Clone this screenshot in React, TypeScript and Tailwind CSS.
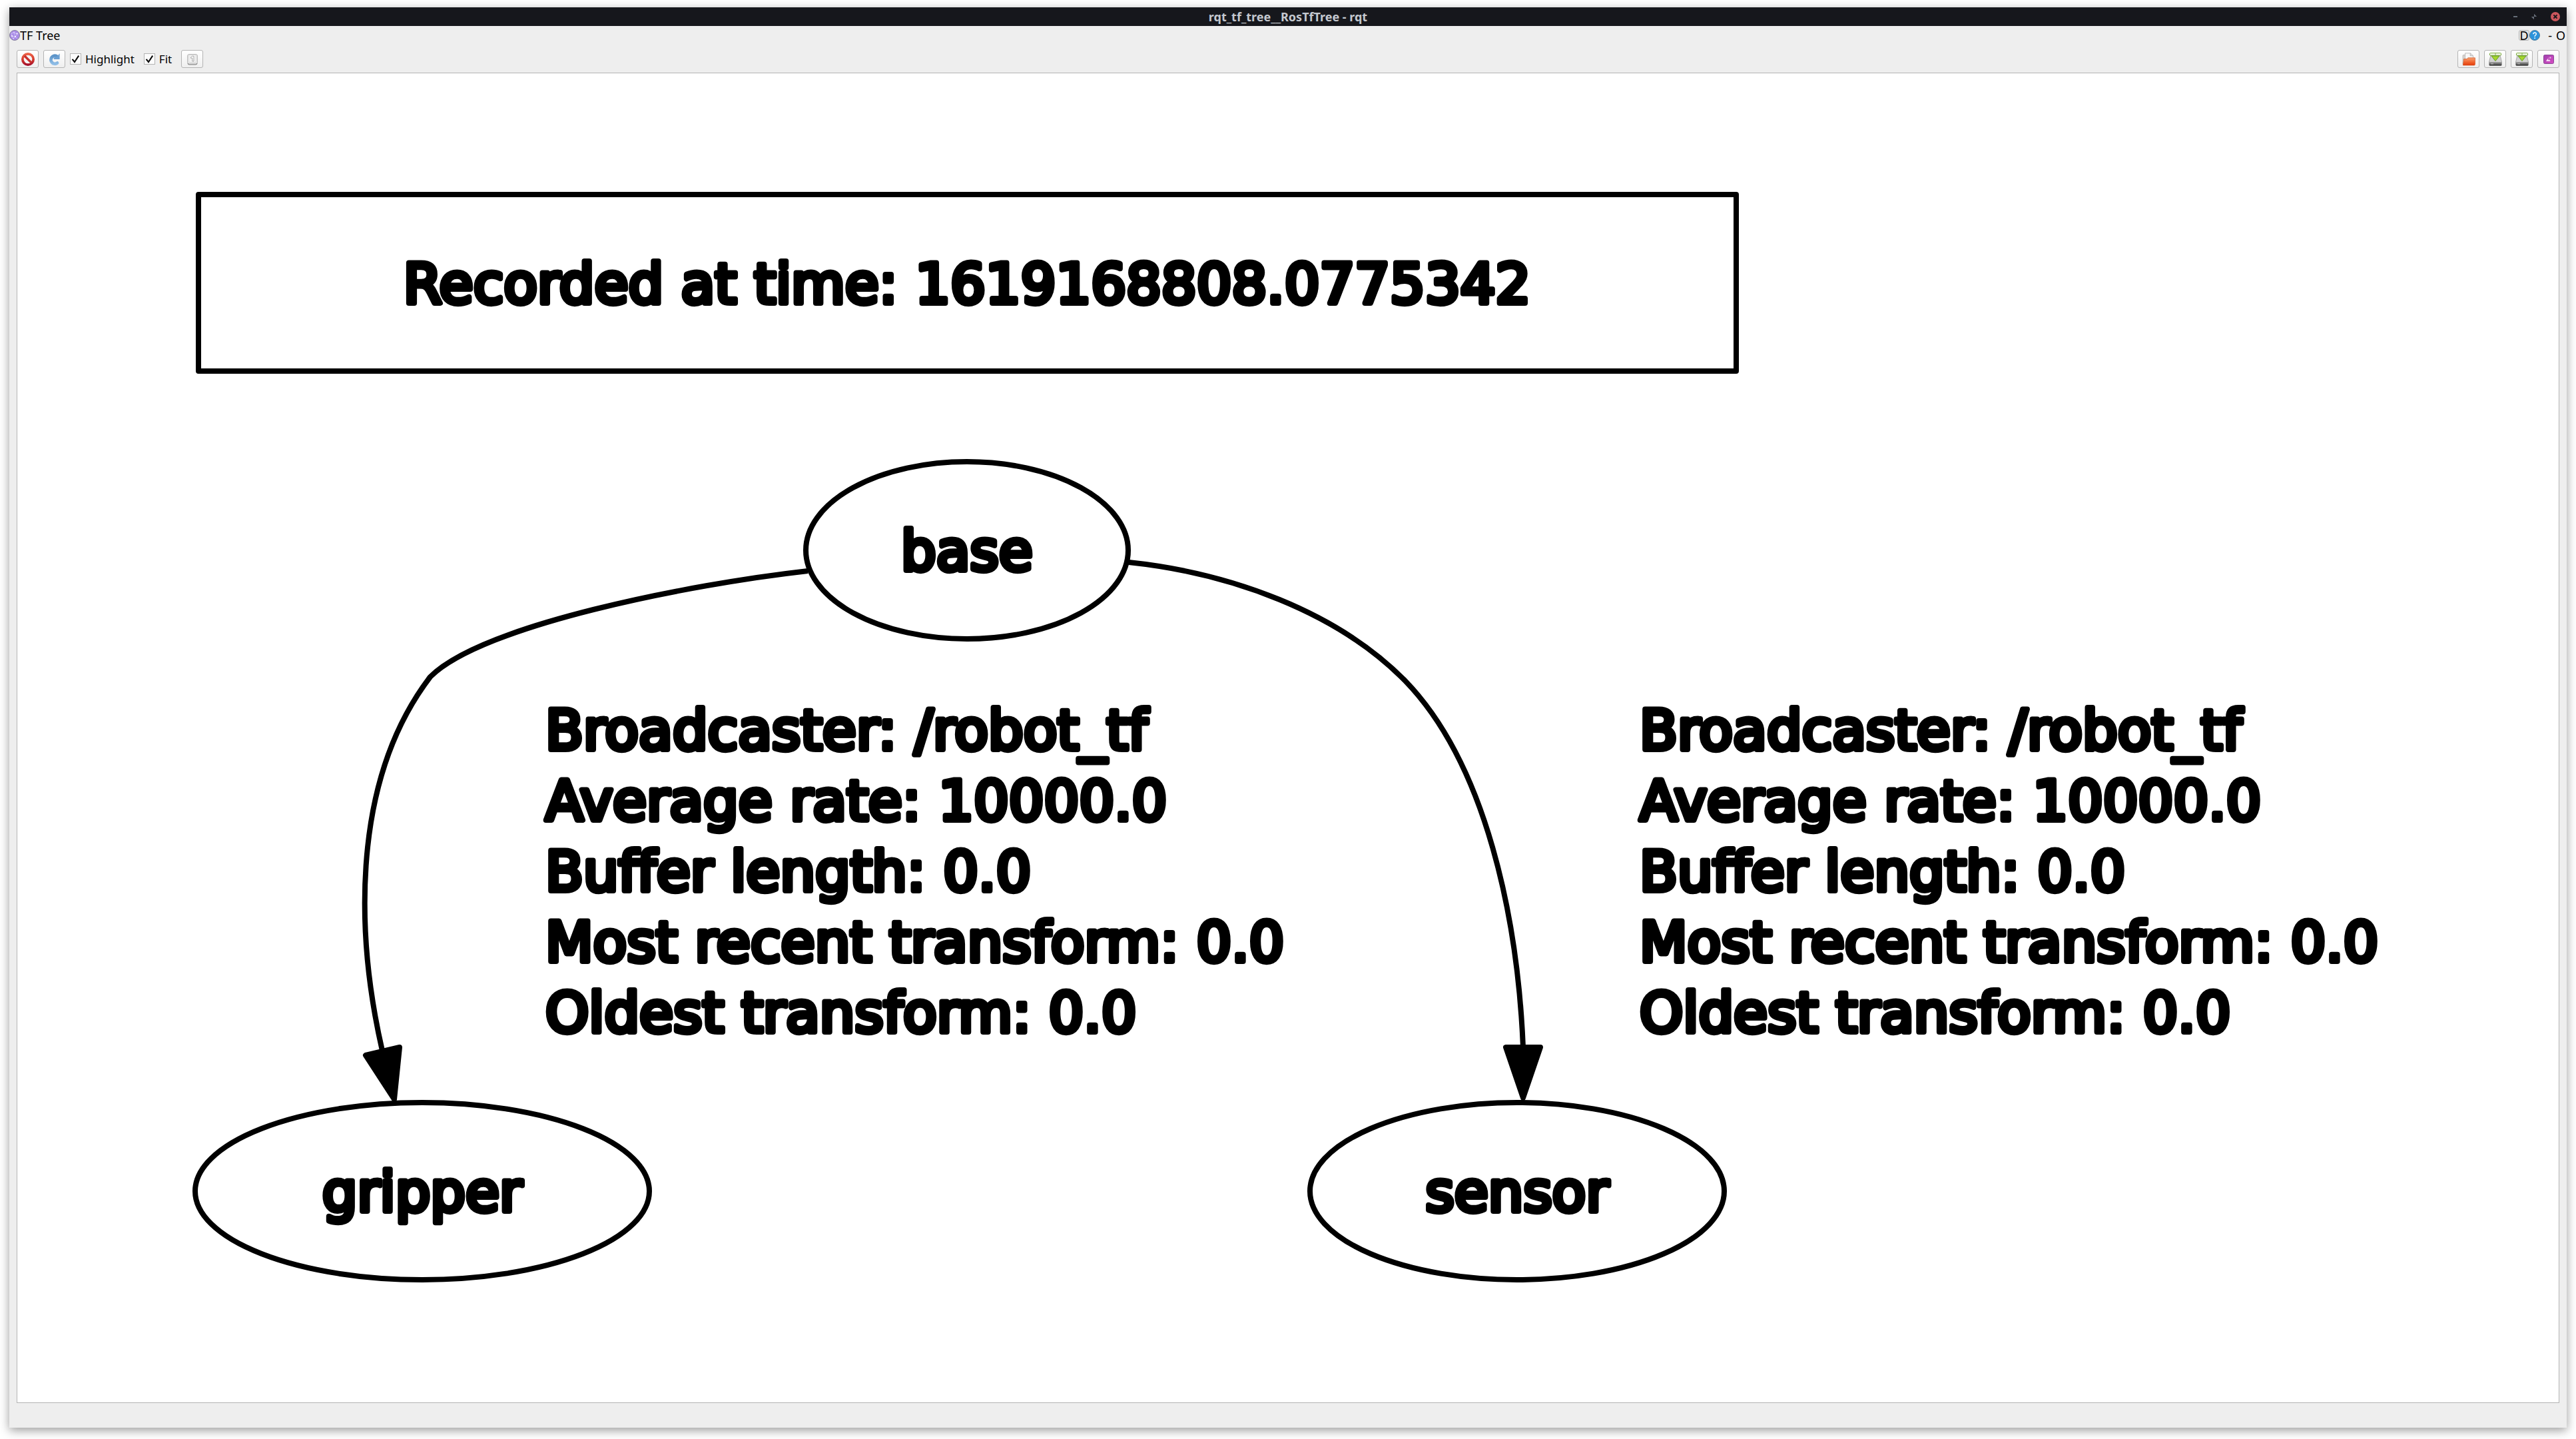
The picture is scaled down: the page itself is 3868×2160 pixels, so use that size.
import type { ReactNode } from "react";

const STROKE = 8;

function StopIcon() {
  return (
    <svg viewBox="0 0 20 20" className="size-5" aria-hidden="true">
      <defs>
        <linearGradient id="stop" x1="0" y1="0" x2="0" y2="1">
          <stop offset="0" stopColor="#f0694c" />
          <stop offset="0.5" stopColor="#d63a2c" />
          <stop offset="1" stopColor="#9c0a2c" />
        </linearGradient>
      </defs>
      <circle cx="10" cy="10" r="10" fill="url(#stop)" />
      <circle cx="10" cy="10" r="6.3" fill="#f6f4f4" />
      <path d="M5 5 L15 15" stroke="#c9302c" strokeWidth="3.4" />
    </svg>
  );
}

function RefreshIcon() {
  return (
    <svg viewBox="0 0 20 20" className="size-5" aria-hidden="true">
      <defs>
        <linearGradient id="refresh" x1="0" y1="0" x2="0" y2="1">
          <stop offset="0" stopColor="#5a93c8" />
          <stop offset="1" stopColor="#8fbde6" />
        </linearGradient>
      </defs>
      <path
        d="M13.2 5.4 A6 6 0 1 0 14 15.6"
        fill="none"
        stroke="url(#refresh)"
        strokeWidth="4.8"
        strokeLinecap="round"
      />
      <path d="M17.6 1.2 V10 H8.8 V7.6 L13 6.4 Z" fill="#6a9fd2" />
    </svg>
  );
}

function FitIcon() {
  return (
    <svg viewBox="0 0 18 18" className="size-[18px]" aria-hidden="true">
      <rect x="1.5" y="1.5" width="15" height="14.5" rx="2.5" fill="#e6e6e6" stroke="#b9b9b9" />
      <path d="M2 14.8 Q2.2 16.8 4 16.8 H14 Q15.8 16.8 16 14.8" fill="none" stroke="#8e8e8e" strokeWidth="1.2" />
      <rect x="3.5" y="2.5" width="11" height="11" rx="1.5" fill="#f2f2f2" stroke="#d4d4d4" strokeWidth="0.6" />
      <path d="M6.4 6 L8.6 4.2 H11 V12 H8.8 V7.2 H6.4 Z" fill="#fafafa" stroke="#a2a2a2" strokeWidth="0.9" />
    </svg>
  );
}

function FolderIcon() {
  return (
    <svg viewBox="0 0 20 20" className="size-5" aria-hidden="true">
      <defs>
        <linearGradient id="folder" x1="0" y1="0" x2="0" y2="1">
          <stop offset="0" stopColor="#f6a272" />
          <stop offset="0.6" stopColor="#f0622c" />
          <stop offset="1" stopColor="#e23c0c" />
        </linearGradient>
      </defs>
      <path d="M1 4.5 Q1 3.5 2 3.5 H6 V18 H2 Q1 18 1 17 Z" fill="#d9d4d0" stroke="#a8a4a0" strokeWidth="0.6" />
      <path d="M4.5 0.8 H12.5 L16.5 4.6 V12 H4.5 Z" fill="#f8f8f8" stroke="#b0b0b0" strokeWidth="0.8" />
      <path d="M12.2 1 V4.8 H16.4" fill="#dedede" stroke="#a8a8a8" strokeWidth="0.7" />
      <path d="M2.6 9.5 H7.2 L8.8 7.8 H19.4 V17.6 Q19.4 19 18 19 H1.4 Z" fill="url(#folder)" stroke="#d6501c" strokeWidth="0.7" />
    </svg>
  );
}

function SaveIcon({ id }: { id: string }) {
  return (
    <svg viewBox="0 0 20 20" className="size-5" aria-hidden="true">
      <defs>
        <linearGradient id={id} x1="0" y1="0" x2="0" y2="1">
          <stop offset="0" stopColor="#a8a8a8" />
          <stop offset="1" stopColor="#2e2e2e" />
        </linearGradient>
      </defs>
      <path d="M3 3.5 H17 L19.4 14 V18 Q19.4 19.6 18 19.6 H2 Q0.6 19.6 0.6 18 V14 Z" fill="#d2d2d2" stroke="#8c8c8c" strokeWidth="0.7" />
      <path d="M0.8 14 H19.2 V18.2 Q19.2 19.4 18 19.4 H2 Q0.8 19.4 0.8 18.2 Z" fill={`url(#${id})`} />
      <path d="M3 16.8 H7" stroke="#c4c4c4" strokeWidth="1" />
      <rect x="1.5" y="0.7" width="17" height="3.4" rx="0.8" fill="#fbfff4" stroke="#6fa32c" />
      <path d="M10 1 V4" stroke="#6fa32c" strokeWidth="0.8" />
      <path d="M4 5 H16 L10 12.6 Z" fill="#a4d62c" stroke="#5f9420" strokeWidth="0.9" />
    </svg>
  );
}

function ImageIcon() {
  return (
    <svg viewBox="0 0 16 14" className="h-3.5 w-4" aria-hidden="true">
      <defs>
        <linearGradient id="image" x1="0" y1="0" x2="1" y2="1">
          <stop offset="0" stopColor="#9f3fae" />
          <stop offset="1" stopColor="#d84cc4" />
        </linearGradient>
      </defs>
      <rect x="0.5" y="0.5" width="15" height="13" rx="1.8" fill="url(#image)" stroke="#8a4a94" />
      <path d="M4 10 L6.4 6 L8 8.4 L9 7.2 L10.6 10 Z" fill="#f6dcf4" />
      <rect x="9.4" y="3.6" width="2" height="2" fill="#f0c8ee" />
      <rect x="7.2" y="4.6" width="1.2" height="1.2" fill="#e0a4dc" />
    </svg>
  );
}

function PluginIcon() {
  return (
    <svg viewBox="0 0 16 16" className="size-4" aria-hidden="true">
      <circle cx="8" cy="8" r="7.5" fill="#a98be6" stroke="#85809c" />
      <path d="M3 5 L7 4 L12 6 L9 10 L4 9 Z M7 4 L9 10 L12 13 M4 9 L6 13 L9 10" fill="none" stroke="#cdbdf6" strokeWidth="0.9" />
      <circle cx="4" cy="9" r="1" fill="#ffffff" />
      <circle cx="9" cy="10" r="1.1" fill="#ffffff" />
      <circle cx="11.6" cy="5.4" r="1" fill="#ffffff" />
      <circle cx="7" cy="3.6" r="0.8" fill="#ece4ff" />
      <circle cx="6.4" cy="13" r="0.8" fill="#ece4ff" />
    </svg>
  );
}

function ToolButton({ label, disabled, children }: { label: string; disabled?: boolean; children: ReactNode }) {
  return (
    <button
      type="button"
      aria-label={label}
      disabled={disabled}
      className="flex h-[27px] w-[33px] items-center justify-center rounded-[3px] border border-[#b4b4b4] bg-linear-to-b from-white to-[#efefef]"
    >
      {children}
    </button>
  );
}

function CheckOption({ id, label }: { id: string; label: string }) {
  return (
    <div className="flex items-center gap-1.5">
      <span className="relative flex size-[17px]">
        <input
          id={id}
          type="checkbox"
          defaultChecked
          className="peer size-[17px] appearance-none border border-[#b4b4b4] bg-[#fcfcfc]"
        />
        <svg
          viewBox="0 0 17 17"
          className="pointer-events-none absolute inset-0 hidden size-[17px] peer-checked:block"
          aria-hidden="true"
        >
          <path d="M3.6 8.8 L7 13 L13.2 3.6" fill="none" stroke="#000000" strokeWidth="2" />
        </svg>
      </span>
      <label htmlFor={id}>{label}</label>
    </div>
  );
}

function TitleBar() {
  return (
    <header className="grid h-7 grid-cols-[1fr_auto_1fr] items-center bg-[#16171c] text-lg leading-7 font-bold text-[#c4c8cf]">
      <span />
      <h1>rqt_tf_tree__RosTfTree - rqt</h1>
      <div className="flex items-center justify-end gap-5 pr-2.5">
        <button type="button" aria-label="Minimize">
          <svg viewBox="0 0 6 6" className="size-1.5" aria-hidden="true">
            <path d="M0 3 H6" stroke="#666d78" strokeWidth="2" />
          </svg>
        </button>
        <button type="button" aria-label="Restore">
          <svg viewBox="0 0 10 10" className="size-2.5" aria-hidden="true">
            <path d="M5 0.8 V5 H9.2 Z M0.8 5 H5 V9.2 Z" fill="#666d78" />
          </svg>
        </button>
        <button type="button" aria-label="Close">
          <svg viewBox="0 0 14 14" className="size-3.5" aria-hidden="true">
            <circle cx="7" cy="7" r="7" fill="#cc575d" />
            <path d="M4.4 4.4 L9.6 9.6 M9.6 4.4 L4.4 9.6" stroke="#16171c" strokeWidth="2" />
          </svg>
        </button>
      </div>
    </header>
  );
}

function DockTitle() {
  return (
    <div className="flex h-7 items-center justify-between text-lg leading-6">
      <div className="flex items-center">
        <PluginIcon />
        <span>TF Tree</span>
      </div>
      <div className="flex items-center pr-0.5">
        <button
          type="button"
          aria-label="Reload plugin"
          className="flex size-4 items-center justify-center rounded-[3px] border border-[#b4b4b4] bg-[#e4e4e4] leading-none"
        >
          D
        </button>
        <button type="button" aria-label="Help">
          <svg viewBox="0 0 16 16" className="size-4" aria-hidden="true">
            <circle cx="8" cy="8" r="7.5" fill="#2b93dc" stroke="#55809c" />
            <path d="M5.8 6.2 Q5.8 4 8.1 4 Q10.3 4 10.3 6 Q10.3 7.2 9 8 Q8.1 8.6 8.1 10" fill="none" stroke="#ffffff" strokeWidth="1.4" />
            <circle cx="8.1" cy="12.2" r="0.9" fill="#ffffff" />
          </svg>
        </button>
        <button type="button" className="ml-3">
          -
        </button>
        <button type="button" className="ml-1.5">
          O
        </button>
      </div>
    </div>
  );
}

function Toolbar() {
  return (
    <div className="flex items-center justify-between pt-2 pb-[7px]">
      <div className="flex items-center gap-3.5">
        <div className="flex items-center gap-[7px]">
          <ToolButton label="Clear buffer">
            <StopIcon />
          </ToolButton>
          <ToolButton label="Refresh">
            <RefreshIcon />
          </ToolButton>
          <CheckOption id="highlight" label="Highlight" />
        </div>
        <CheckOption id="fit" label="Fit" />
        <ToolButton label="Fit in view" disabled>
          <FitIcon />
        </ToolButton>
      </div>
      <div className="flex items-center gap-[7px]">
        <ToolButton label="Load DOT graph">
          <FolderIcon />
        </ToolButton>
        <ToolButton label="Save as DOT graph">
          <SaveIcon id="disk-dot" />
        </ToolButton>
        <ToolButton label="Save as SVG">
          <SaveIcon id="disk-svg" />
        </ToolButton>
        <ToolButton label="Save as image">
          <ImageIcon />
        </ToolButton>
      </div>
    </div>
  );
}

const frameNodes = [
  { name: "base", cx: 1452, cy: 826, rx: 242 },
  { name: "gripper", cx: 634, cy: 1788, rx: 341 },
  { name: "sensor", cx: 2278, cy: 1788, rx: 311 },
];

const edges = [
  {
    x: 819,
    path: "M1213 857 C1035 877 724 938 646 1016 C521 1180 538 1420 574 1577",
    head: "549,1584 600,1572 592,1650",
  },
  {
    x: 2462,
    path: "M1695 844 C1847 860 2008 918 2110 1022 C2232 1148 2279 1380 2287 1572",
    head: "2261,1572 2313,1572 2287,1648",
  },
];

const edgeLines = [
  "Broadcaster: /robot_tf",
  "Average rate: 10000.0",
  "Buffer length: 0.0",
  "Most recent transform: 0.0",
  "Oldest transform: 0.0",
];

function Graph() {
  return (
    <svg
      viewBox="26 110 3816 1995"
      className="block w-full flex-1"
      fill="none"
      stroke="#000000"
      strokeWidth={STROKE}
      strokeLinejoin="round"
      role="img"
      aria-label="TF frame tree"
    >
      <rect x="298" y="292" width="2309" height="265" />
      {frameNodes.map((n) => (
        <ellipse key={n.name} cx={n.cx} cy={n.cy} rx={n.rx} ry={133} />
      ))}
      {edges.map((e) => (
        <g key={e.x}>
          <path d={e.path} />
          <polygon points={e.head} fill="#000000" />
        </g>
      ))}
      <g
        fill="#000000"
        fontSize={83}
        className="font-['DejaVu_Sans',sans-serif] [text-rendering:geometricPrecision]"
      >
        <text x="1452" y="455" textAnchor="middle">
          Recorded at time: 1619168808.0775342
        </text>
        {frameNodes.map((n) => (
          <text key={n.name} x={n.cx} y={n.cy + 30} textAnchor="middle">
            {n.name}
          </text>
        ))}
        {edges.map((e) =>
          edgeLines.map((line, i) => (
            <text key={line + e.x} x={e.x} y={1125 + i * 106}>
              {line}
            </text>
          )),
        )}
      </g>
    </svg>
  );
}

export default function App() {
  return (
    <div className="flex min-h-screen flex-col bg-white px-3.5 pt-[11px] pb-[17px] font-['Noto_Sans',sans-serif] text-[17px] leading-6 text-black">
      <div className="flex flex-1 flex-col bg-[#eeeeee] shadow-[0_4px_14px_rgba(0,0,0,0.4)]">
        <TitleBar />
        <DockTitle />
        <main className="flex flex-1 flex-col px-[11px] pb-[37px]">
          <Toolbar />
          <div className="flex flex-1 flex-col border border-[#b4b4b4] bg-white">
            <Graph />
          </div>
        </main>
      </div>
    </div>
  );
}
